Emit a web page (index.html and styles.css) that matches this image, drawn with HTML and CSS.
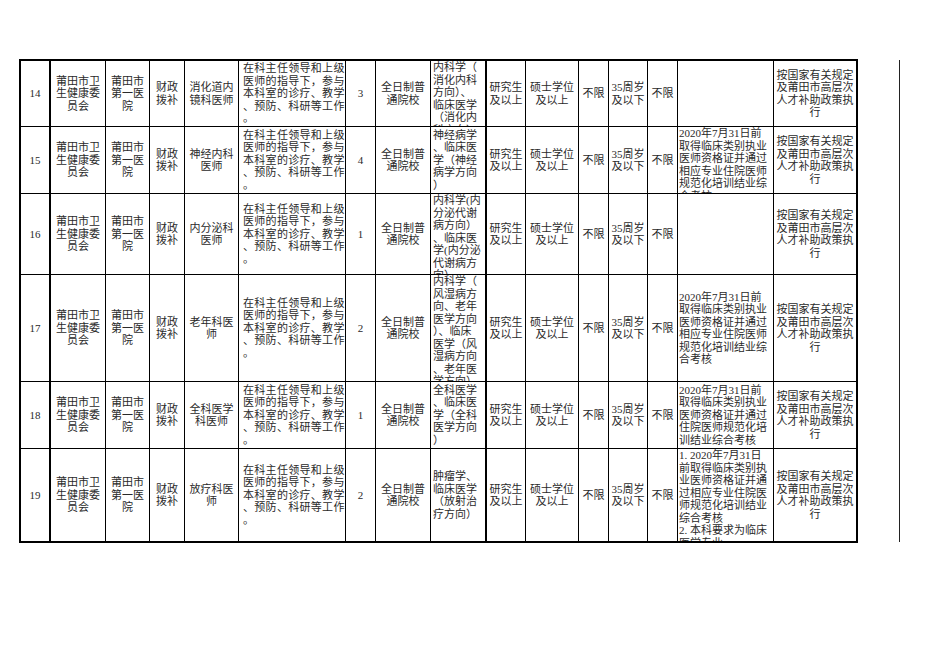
FILE: index.html
```html
<!DOCTYPE html>
<html lang="zh-CN">
<head>
<meta charset="utf-8">
<title>招聘岗位表</title>
<link rel="stylesheet" href="styles.css">
</head>
<body>
<div class="page">
  <div class="sheet">
    <!-- row 14 -->
    <div class="c n"><div class="t">14</div></div>
    <div class="c"><div class="t">莆田市卫<br>生健康委<br>员会</div></div>
    <div class="c"><div class="t">莆田市<br>第一医<br>院</div></div>
    <div class="c"><div class="t">财政<br>拨补</div></div>
    <div class="c"><div class="t">消化道内<br>镜科医师</div></div>
    <div class="c l d"><div class="t">在科主任领导和上级<br>医师的指导下，参与<br>本科室的诊疗、教学<br>、预防、科研等工作<br>。</div></div>
    <div class="c"><div class="t">3</div></div>
    <div class="c"><div class="t">全日制普<br>通院校</div></div>
    <div class="c l m"><div class="t">内科学（<br>消化内科<br>方向）、<br>临床医学<br>（消化内<br>科方向）</div></div>
    <div class="c"><div class="t">研究生<br>及以上</div></div>
    <div class="c"><div class="t">硕士学位<br>及以上</div></div>
    <div class="c"><div class="t">不限</div></div>
    <div class="c"><div class="t">35周岁<br>及以下</div></div>
    <div class="c"><div class="t">不限</div></div>
    <div class="c l"><div class="t"></div></div>
    <div class="c r"><div class="t">按国家有关规定<br>及莆田市高层次<br>人才补助政策执<br>行</div></div>

    <!-- row 15 -->
    <div class="c n"><div class="t">15</div></div>
    <div class="c"><div class="t">莆田市卫<br>生健康委<br>员会</div></div>
    <div class="c"><div class="t">莆田市<br>第一医<br>院</div></div>
    <div class="c"><div class="t">财政<br>拨补</div></div>
    <div class="c"><div class="t">神经内科<br>医师</div></div>
    <div class="c l d"><div class="t">在科主任领导和上级<br>医师的指导下，参与<br>本科室的诊疗、教学<br>、预防、科研等工作<br>。</div></div>
    <div class="c"><div class="t">4</div></div>
    <div class="c"><div class="t">全日制普<br>通院校</div></div>
    <div class="c l m"><div class="t">神经病学<br>、临床医<br>学（神经<br>病学方向<br>）</div></div>
    <div class="c"><div class="t">研究生<br>及以上</div></div>
    <div class="c"><div class="t">硕士学位<br>及以上</div></div>
    <div class="c"><div class="t">不限</div></div>
    <div class="c"><div class="t">35周岁<br>及以下</div></div>
    <div class="c"><div class="t">不限</div></div>
    <div class="c l"><div class="t">2020年7月31日前<br>取得临床类别执业<br>医师资格证并通过<br>相应专业住院医师<br>规范化培训结业综<br>合考核</div></div>
    <div class="c r"><div class="t">按国家有关规定<br>及莆田市高层次<br>人才补助政策执<br>行</div></div>

    <!-- row 16 -->
    <div class="c n"><div class="t">16</div></div>
    <div class="c"><div class="t">莆田市卫<br>生健康委<br>员会</div></div>
    <div class="c"><div class="t">莆田市<br>第一医<br>院</div></div>
    <div class="c"><div class="t">财政<br>拨补</div></div>
    <div class="c"><div class="t">内分泌科<br>医师</div></div>
    <div class="c l d"><div class="t">在科主任领导和上级<br>医师的指导下，参与<br>本科室的诊疗、教学<br>、预防、科研等工作<br>。</div></div>
    <div class="c"><div class="t">1</div></div>
    <div class="c"><div class="t">全日制普<br>通院校</div></div>
    <div class="c l m"><div class="t">内科学(内<br>分泌代谢<br>病方向）<br>、临床医<br>学(内分泌<br>代谢病方<br>向）</div></div>
    <div class="c"><div class="t">研究生<br>及以上</div></div>
    <div class="c"><div class="t">硕士学位<br>及以上</div></div>
    <div class="c"><div class="t">不限</div></div>
    <div class="c"><div class="t">35周岁<br>及以下</div></div>
    <div class="c"><div class="t">不限</div></div>
    <div class="c l"><div class="t"></div></div>
    <div class="c r"><div class="t">按国家有关规定<br>及莆田市高层次<br>人才补助政策执<br>行</div></div>

    <!-- row 17 -->
    <div class="c n"><div class="t">17</div></div>
    <div class="c"><div class="t">莆田市卫<br>生健康委<br>员会</div></div>
    <div class="c"><div class="t">莆田市<br>第一医<br>院</div></div>
    <div class="c"><div class="t">财政<br>拨补</div></div>
    <div class="c"><div class="t">老年科医<br>师</div></div>
    <div class="c l d"><div class="t">在科主任领导和上级<br>医师的指导下，参与<br>本科室的诊疗、教学<br>、预防、科研等工作<br>。</div></div>
    <div class="c"><div class="t">2</div></div>
    <div class="c"><div class="t">全日制普<br>通院校</div></div>
    <div class="c l m"><div class="t">内科学（<br>风湿病方<br>向、老年<br>医学方向<br>）、临床<br>医学（风<br>湿病方向<br>、老年医<br>学方向）</div></div>
    <div class="c"><div class="t">研究生<br>及以上</div></div>
    <div class="c"><div class="t">硕士学位<br>及以上</div></div>
    <div class="c"><div class="t">不限</div></div>
    <div class="c"><div class="t">35周岁<br>及以下</div></div>
    <div class="c"><div class="t">不限</div></div>
    <div class="c l"><div class="t">2020年7月31日前<br>取得临床类别执业<br>医师资格证并通过<br>相应专业住院医师<br>规范化培训结业综<br>合考核</div></div>
    <div class="c r"><div class="t">按国家有关规定<br>及莆田市高层次<br>人才补助政策执<br>行</div></div>

    <!-- row 18 -->
    <div class="c n"><div class="t">18</div></div>
    <div class="c"><div class="t">莆田市卫<br>生健康委<br>员会</div></div>
    <div class="c"><div class="t">莆田市<br>第一医<br>院</div></div>
    <div class="c"><div class="t">财政<br>拨补</div></div>
    <div class="c"><div class="t">全科医学<br>科医师</div></div>
    <div class="c l d"><div class="t">在科主任领导和上级<br>医师的指导下，参与<br>本科室的诊疗、教学<br>、预防、科研等工作<br>。</div></div>
    <div class="c"><div class="t">1</div></div>
    <div class="c"><div class="t">全日制普<br>通院校</div></div>
    <div class="c l m"><div class="t">全科医学<br>、临床医<br>学（全科<br>医学方向<br>）</div></div>
    <div class="c"><div class="t">研究生<br>及以上</div></div>
    <div class="c"><div class="t">硕士学位<br>及以上</div></div>
    <div class="c"><div class="t">不限</div></div>
    <div class="c"><div class="t">35周岁<br>及以下</div></div>
    <div class="c"><div class="t">不限</div></div>
    <div class="c l"><div class="t">2020年7月31日前<br>取得临床类别执业<br>医师资格证并通过<br>住院医师规范化培<br>训结业综合考核</div></div>
    <div class="c r"><div class="t">按国家有关规定<br>及莆田市高层次<br>人才补助政策执<br>行</div></div>

    <!-- row 19 -->
    <div class="c n b"><div class="t">19</div></div>
    <div class="c b"><div class="t">莆田市卫<br>生健康委<br>员会</div></div>
    <div class="c b"><div class="t">莆田市<br>第一医<br>院</div></div>
    <div class="c b"><div class="t">财政<br>拨补</div></div>
    <div class="c b"><div class="t">放疗科医<br>师</div></div>
    <div class="c l d b"><div class="t">在科主任领导和上级<br>医师的指导下，参与<br>本科室的诊疗、教学<br>、预防、科研等工作<br>。</div></div>
    <div class="c b"><div class="t">2</div></div>
    <div class="c b"><div class="t">全日制普<br>通院校</div></div>
    <div class="c l m b"><div class="t">肿瘤学、<br>临床医学<br>（放射治<br>疗方向）</div></div>
    <div class="c b"><div class="t">研究生<br>及以上</div></div>
    <div class="c b"><div class="t">硕士学位<br>及以上</div></div>
    <div class="c b"><div class="t">不限</div></div>
    <div class="c b"><div class="t">35周岁<br>及以下</div></div>
    <div class="c b"><div class="t">不限</div></div>
    <div class="c l b"><div class="t">1. 2020年7月31日<br>前取得临床类别执<br>业医师资格证并通<br>过相应专业住院医<br>师规范化培训结业<br>综合考核<br>2. 本科要求为临床<br>医学专业</div></div>
    <div class="c r b"><div class="t">按国家有关规定<br>及莆田市高层次<br>人才补助政策执<br>行</div></div>
  </div>
  <div class="pb"></div>
</div>
</body>
</html>
```
FILE: styles.css
```css
html, body {
  margin: 0;
  padding: 0;
  background: #fff;
}

body {
  font-family: "Liberation Serif", "Noto Sans CJK SC", serif;
  font-size: 11px;
  line-height: 12.5px;
  color: #2a2a2a;
}

.page {
  display: flex;
  align-items: flex-start;
  padding: 59px 0 0 19px;
}

.sheet {
  display: grid;
  grid-template-columns: 30px 55px 44px 35px 54px 107px 30px 55px 56px 39px 53px 30px 39px 30px 96px 84px;
  grid-template-rows: 66px 67px 81px 107px 67px 94px;
  border-top: 2px solid #000;
  border-left: 2px solid #000;
  box-sizing: content-box;
}

.c {
  box-sizing: border-box;
  border-right: 1px solid #000;
  border-bottom: 1px solid #000;
  overflow: hidden;
  display: flex;
  flex-direction: column;
  padding: 0 1px;
}

.t {
  margin: auto 0;
  text-align: center;
  white-space: nowrap;
}

.l .t {
  text-align: left;
}

.d {
  padding-left: 4px;
}

.d .t {
  letter-spacing: 0.3px;
}

.m {
  padding-left: 2px;
}

.n,
.m,
.r {
  border-right-width: 2px;
}

.b {
  border-bottom-width: 2px;
}

.pb {
  width: 1px;
  height: 482px;
  margin-top: 1px;
  margin-left: 41px;
  background: #222;
}
```
